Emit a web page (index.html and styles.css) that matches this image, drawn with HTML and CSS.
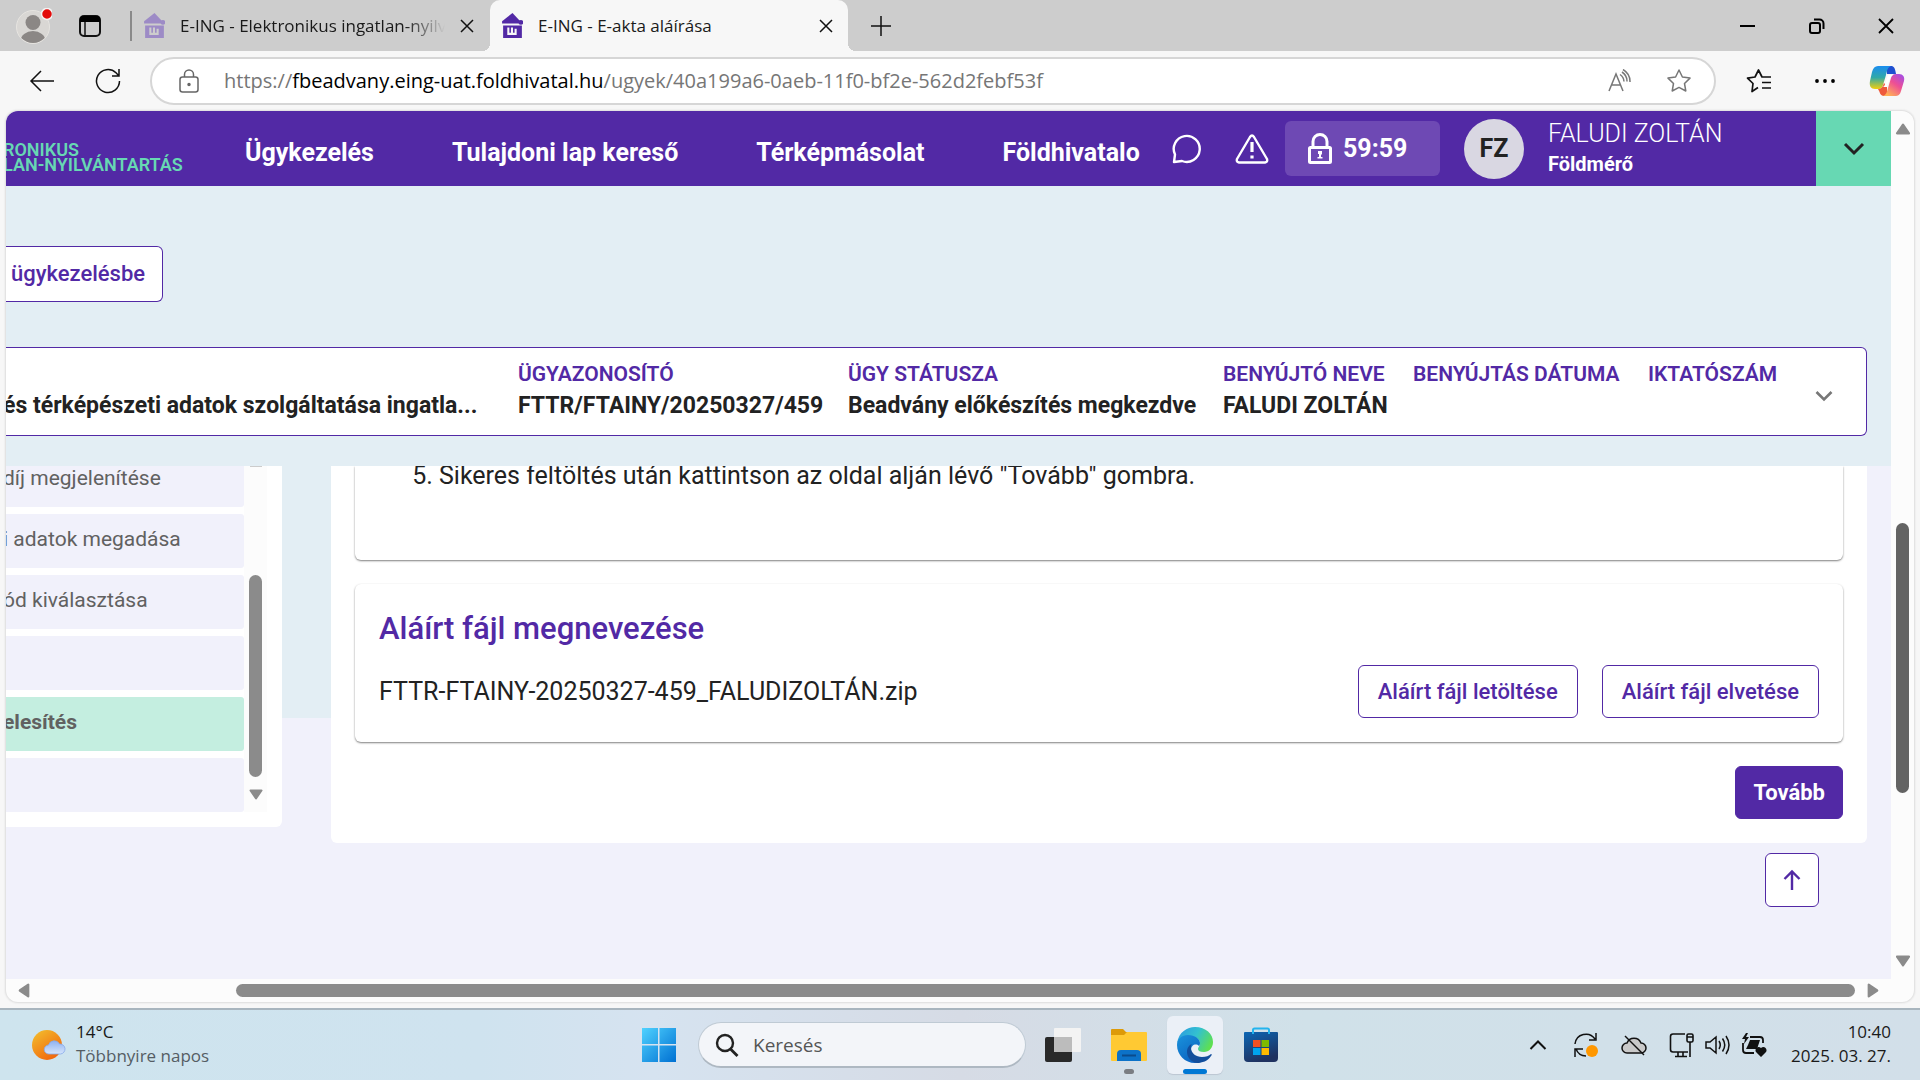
FILE: index.html
```
<!DOCTYPE html>
<html lang="hu">
<head>
<meta charset="utf-8">
<title>E-ING - E-akta aláírása</title>
<link rel="stylesheet" href="styles.css">
</head>
<body>
<svg width="0" height="0" class="defs" aria-hidden="true">
  <symbol id="house" viewBox="0 0 20 24"><path d="M10 0l7 7.500v2.500H0V8z"/><circle cx="18" cy="9" r="2.300"/><path d="M1 12h18v12H1zM5 14v7h9v-6h-2v4h-1.500v-5h-2v5H7v-5z" fill-rule="evenodd"/></symbol>
  <symbol id="cross" viewBox="0 0 14 14"><path d="M1 1l12 12M13 1L1 13" fill="none" stroke="currentColor" stroke-width="1.500"/></symbol>
  <symbol id="tri-up" viewBox="0 0 14 11"><path d="M7 1.500L12.500 9.500H1.500z" fill="currentColor" stroke="currentColor" stroke-width="2" stroke-linejoin="round"/></symbol>
  <symbol id="tri-down" viewBox="0 0 14 11"><path d="M7 9.500L12.500 1.500H1.500z" fill="currentColor" stroke="currentColor" stroke-width="2" stroke-linejoin="round"/></symbol>
  <symbol id="tri-left" viewBox="0 0 11 14"><path d="M1.500 7L9.500 1.500v11z" fill="currentColor" stroke="currentColor" stroke-width="2" stroke-linejoin="round"/></symbol>
  <symbol id="tri-right" viewBox="0 0 11 14"><path d="M9.500 7L1.500 1.500v11z" fill="currentColor" stroke="currentColor" stroke-width="2" stroke-linejoin="round"/></symbol>
</svg>
<div class="screen">
  <header class="tabstrip">
    <button class="icon-btn profile" aria-label="Profil"><svg width="36" height="36" viewBox="0 0 36 36"><defs><clipPath id="pc"><circle cx="17" cy="19" r="16"/></clipPath></defs><circle cx="17" cy="19" r="16.500" fill="#d9d7d4" stroke="#e6e4e0"/><g clip-path="url(#pc)" fill="#8b8785"><circle cx="17" cy="14.500" r="7.500"/><ellipse cx="17" cy="33" rx="12.500" ry="10"/></g><circle cx="31" cy="6" r="5.500" fill="#e30b0b" stroke="#f3f3f3" stroke-width="1.500"/></svg></button>
    <button class="icon-btn workspaces" aria-label="Munkaterületek"><svg width="22" height="22" viewBox="0 0 22 22"><rect x="1" y="1" width="20" height="20" rx="4" fill="none" stroke="#111" stroke-width="2"/><path d="M1 6V4a3 3 0 013-3h14a3 3 0 013 3v3H1z"/><path d="M6 7v14" stroke="#111" stroke-width="1.500"/></svg></button>
    <div class="tab tab-idle">
      <svg class="fav" width="21" height="25" fill="#9d8bc6"><use href="#house"/></svg>
      <span class="tab-title fade">E-ING - Elektronikus ingatlan-nyilvántartás</span>
      <button class="icon-btn" aria-label="Lap bezárása"><svg width="14" height="14"><use href="#cross"/></svg></button>
    </div>
    <div class="tab tab-active">
      <svg class="fav" width="21" height="25" fill="#5229a5"><use href="#house"/></svg>
      <span class="tab-title">E-ING - E-akta aláírása</span>
      <button class="icon-btn" aria-label="Lap bezárása"><svg width="14" height="14"><use href="#cross"/></svg></button>
    </div>
    <button class="icon-btn new-tab" aria-label="Új lap"><svg width="22" height="22" viewBox="0 0 22 22"><path d="M11 1v20M1 11h20" stroke="#111" stroke-width="1.500"/></svg></button>
    <div class="win-controls">
      <button class="icon-btn" aria-label="Kis méret"><svg width="16" height="16" viewBox="0 0 16 16"><path d="M0 8h15" stroke="#000" stroke-width="2"/></svg></button>
      <button class="icon-btn" aria-label="Előző méret"><svg width="16" height="16" viewBox="0 0 16 16"><rect x="1" y="5" width="10" height="10" rx="2" fill="none" stroke="#000" stroke-width="2"/><path d="M5 1.500h5.500a4 4 0 014 4V11" fill="none" stroke="#000" stroke-width="2"/></svg></button>
      <button class="icon-btn" aria-label="Bezárás"><svg width="16" height="16" viewBox="0 0 16 16"><path d="M1 1l14 14M15 1L1 15" stroke="#000" stroke-width="1.800"/></svg></button>
    </div>
  </header>

  <div class="toolbar">
    <button class="icon-btn" aria-label="Vissza"><svg width="26" height="24" viewBox="0 0 26 24"><path d="M25 12H2M12 2L2 12l10 10" fill="none" stroke="#111" stroke-width="1.500"/></svg></button>
    <button class="icon-btn reload" aria-label="Frissítés"><svg width="26" height="26" viewBox="0 0 26 26"><path d="M24.500 13A11.500 11.500 0 1121 4.800L24 8M24 1v7h-7" fill="none" stroke="#111" stroke-width="1.500"/></svg></button>
    <div class="address">
      <svg width="20" height="24" viewBox="0 0 20 24" fill="none" stroke="#666" stroke-width="1.500"><rect x="1" y="8" width="18" height="15" rx="2.500"/><path d="M5.500 8V5.500a4.500 4.500 0 019 0V8"/><circle cx="10" cy="15.500" r="1" fill="#666"/></svg>
      <div class="url" role="textbox" aria-label="Cím">https://<span class="host">fbeadvany.eing-uat.foldhivatal.hu</span>/ugyek/40a199a6-0aeb-11f0-bf2e-562d2febf53f</div>
      <button class="icon-btn" aria-label="Felolvasás"><svg width="24" height="24" viewBox="0 0 24 24" fill="none" stroke="#777" stroke-width="1.500"><path d="M1 22L8 5l7 17M3.500 16h9M12 5.500a9 9 0 014 7M14 3a11 11 0 015 9.500M15 .5a14 14 0 017 12.500"/></svg></button>
      <button class="icon-btn star" aria-label="Kedvencekhez adás"><svg width="26" height="26" viewBox="0 0 26 26" fill="none" stroke="#777" stroke-width="1.500" stroke-linejoin="round"><path d="M13 2l3.400 7 7.600 1.100-5.500 5.400 1.300 7.500-6.800-3.600L6.200 23l1.300-7.500L2 10.100 9.600 9z"/></svg></button>
    </div>
    <button class="icon-btn favs" aria-label="Kedvencek"><svg width="26" height="26" viewBox="0 0 26 26" fill="none" stroke="#111" stroke-width="1.700" stroke-linejoin="round"><path d="M12 19.500L6 23.500l1-8L1.500 10.200 9 9l3.500-7L16 9h9M16 14.500h9M16 20h9"/></svg></button>
    <button class="icon-btn dots" aria-label="Beállítások"><svg width="22" height="6" viewBox="0 0 22 6"><circle cx="3" cy="3" r="1.900"/><circle cx="11" cy="3" r="1.900"/><circle cx="19" cy="3" r="1.900"/></svg></button>
    <button class="icon-btn copilot" aria-label="Copilot"><svg width="36" height="32" viewBox="0 0 36 32"><defs><linearGradient id="ca" x1="0" y1="0" x2="0" y2="1"><stop offset="0" stop-color="#1b8df0"/><stop offset=".5" stop-color="#2fa9a8"/><stop offset="1" stop-color="#f2cf0c"/></linearGradient><linearGradient id="cb" x1="1" y1="0" x2=".3" y2="1"><stop offset="0" stop-color="#9a4df0"/><stop offset=".5" stop-color="#ee4f94"/><stop offset="1" stop-color="#ffb056"/></linearGradient></defs><path d="M17 1h5c3 0 4 2 5 8h-9z" fill="#1f4fd0"/><path d="M9 1h13c-3 1-4 4-5 9l-3 10c-1 3-2 4-5 4H6c-4 0-6-3-5-8l2-9c1-4 3-6 6-6z" fill="url(#ca)"/><path d="M9 24c4 0 5-3 6-6l3 3v10h-3c-4 0-4-4-6-7z" fill="#ee5a3c"/><path d="M27 9h3c4 0 6 3 5 7l-3 10c-1 4-3 5-6 5H14c3-1 4-4 5-8l3-10c1-3 2-4 5-4z" fill="url(#cb)"/><path d="M19 10h5c-2 1-3 3-4 6l-2 6h-4c2-1 2-3 3-6z" fill="#fff"/></svg></button>
  </div>

  <div class="viewport">
    <div class="page">
      <nav class="nav">
        <div class="logo"><span>RONIKUS</span><span>LAN-NYILVÁNTARTÁS</span></div>
        <div class="links">
          <a href="#">Ügykezelés</a><a href="#">Tulajdoni lap kereső</a><a href="#">Térképmásolat</a><a href="#">Földhivatalo</a>
        </div>
        <button class="icon-btn chat" aria-label="Üzenetek"><svg width="30" height="30" viewBox="0 0 30 30"><path d="M2 28l1-7.500A13 13 0 1110 27z" fill="none" stroke="#fff" stroke-width="2.400" stroke-linejoin="round"/></svg></button>
        <button class="icon-btn warn" aria-label="Figyelmeztetések"><svg width="34" height="30" viewBox="0 0 34 30"><path d="M15 3q2-3 4 0l13 22q1 3-2 3.500H4Q1 28 2 25z" fill="none" stroke="#fff" stroke-width="2.400" stroke-linejoin="round"/><path d="M17 8v10M17 21.500v3" stroke="#fff" stroke-width="3.200"/></svg></button>
        <div class="timer"><svg width="24" height="31" viewBox="0 0 24 31"><path d="M5 14V8.500a7 7 0 0114 0V14" fill="none" stroke="#fff" stroke-width="3"/><rect x="1.500" y="14.500" width="21" height="15" rx="1" fill="none" stroke="#fff" stroke-width="3"/><path d="M10 18h4v3l-1 1v2h1.500v1.500h-5V24H11v-3h-1z" fill="#fff"/></svg><span>59:59</span></div>
        <div class="avatar">FZ</div>
        <div class="user"><span class="user-name">FALUDI ZOLTÁN</span><span class="user-role">Földmérő</span></div>
        <button class="user-menu" aria-label="Felhasználói menü"><svg width="22" height="14" viewBox="0 0 22 14"><path d="M2 2l9 9 9-9" fill="none" stroke="#222" stroke-width="3"/></svg></button>
      </nav>

      <section class="head">
        <button class="btn back-btn">ügykezelésbe</button>
        <div class="case">
          <div class="case-first"><span class="value">és térképészeti adatok szolgáltatása ingatla...</span></div>
          <div><span class="label">ÜGYAZONOSÍTÓ</span><span class="value">FTTR/FTAINY/20250327/459</span></div>
          <div><span class="label">ÜGY STÁTUSZA</span><span class="value">Beadvány előkészítés megkezdve</span></div>
          <div><span class="label">BENYÚJTÓ NEVE</span><span class="value">FALUDI ZOLTÁN</span></div>
          <div><span class="label">BENYÚJTÁS DÁTUMA</span></div>
          <div><span class="label">IKTATÓSZÁM</span></div>
          <button class="icon-btn case-toggle" aria-label="Részletek"><svg width="18" height="12" viewBox="0 0 18 12"><path d="M1.500 2L9 9.500 16.500 2" fill="none" stroke="#777" stroke-width="2.600"/></svg></button>
        </div>
      </section>

      <main class="body">
        <aside class="side">
          <ul class="steps">
            <li>díj megjelenítése</li>
            <li>i adatok megadása</li>
            <li>ód kiválasztása</li>
            <li></li>
            <li class="current">elesítés</li>
            <li></li>
          </ul>
          <div class="side-scroll">
            <i class="cap"></i><i class="before"></i><i class="thumb"></i>
            <svg width="14" height="11"><use href="#tri-down"/></svg>
          </div>
        </aside>
        <div class="main-col">
          <div class="panel">
            <div class="card guide"><ol start="5"><li>Sikeres feltöltés után kattintson az oldal alján lévő "Tovább" gombra.</li></ol></div>
            <div class="card file">
              <h2>Aláírt fájl megnevezése</h2>
              <div class="file-row">
                <span class="file-name">FTTR-FTAINY-20250327-459_FALUDIZOLTÁN.zip</span>
                <button class="btn">Aláírt fájl letöltése</button>
                <button class="btn">Aláírt fájl elvetése</button>
              </div>
            </div>
            <button class="btn primary">Tovább</button>
          </div>
          <button class="btn to-top" aria-label="Az oldal tetejére"><svg width="18" height="22" viewBox="0 0 18 22"><path d="M9 21V3M1.500 10L9 2.500l7.500 7.500" fill="none" stroke="#5229a5" stroke-width="2.400"/></svg></button>
        </div>
      </main>
    </div>
    <div class="vscroll">
      <svg width="16" height="12"><use href="#tri-up"/></svg>
      <i class="v-before"></i><i class="v-thumb"></i><i class="v-after"></i>
      <svg width="16" height="12"><use href="#tri-down"/></svg>
    </div>
    <div class="hscroll">
      <svg width="12" height="15"><use href="#tri-left"/></svg>
      <i class="h-before"></i><i class="h-thumb"></i>
      <svg width="12" height="15"><use href="#tri-right"/></svg>
    </div>
  </div>

  <footer class="taskbar">
    <div class="weather">
      <svg width="34" height="32" viewBox="0 0 34 32"><defs><linearGradient id="sun" x1="0" y1="0" x2=".7" y2="1"><stop offset="0" stop-color="#f2c22f"/><stop offset="1" stop-color="#f2650c"/></linearGradient><linearGradient id="cl" x1="0" y1="0" x2="0" y2="1"><stop offset="0" stop-color="#8fb2f2"/><stop offset="1" stop-color="#d6e5fb"/></linearGradient></defs><circle cx="15" cy="16" r="15" fill="url(#sun)"/><path d="M17 25a4.500 4.500 0 01-.500-9 6 6 0 0111-1 5 5 0 011 10z" fill="url(#cl)" stroke="#86a9ea" stroke-width=".8"/></svg>
      <div class="two-line"><span>14°C</span><span class="dim">Többnyire napos</span></div>
    </div>
    <div class="apps">
      <button class="icon-btn" aria-label="Start"><svg width="36" height="36" viewBox="0 0 36 36"><defs><linearGradient id="win" x1="0" y1="0" x2="1" y2="1"><stop offset="0" stop-color="#4fd2ff"/><stop offset="1" stop-color="#0070d2"/></linearGradient></defs><path d="M1 1h16v16H1zM18.500 1H35v16H18.500zM1 18.500h16V35H1zM18.500 18.500H35V35H18.500z" fill="url(#win)"/></svg></button>
      <label class="search"><svg width="24" height="24" viewBox="0 0 24 24"><circle cx="10" cy="10" r="8" fill="none" stroke="#222" stroke-width="2.400"/><path d="M15.500 16l7 7" stroke="#222" stroke-width="2.800"/></svg><input type="text" placeholder="Keresés" aria-label="Keresés"></label>
      <button class="icon-btn" aria-label="Feladatnézet"><svg width="36" height="36" viewBox="0 0 36 36"><rect x="0" y="10" width="27" height="25" rx="2" fill="#292929"/><rect x="9" y="1" width="27" height="24" rx="1" fill="#f3f3f3"/><rect x="9" y="10" width="18" height="15" fill="#bcbcbc"/></svg></button>
      <button class="icon-btn app" aria-label="Fájlkezelő"><svg width="38" height="36" viewBox="0 0 38 36"><path d="M1 3q0-1 1-1h11l3 3h20v6H1z" fill="#dd9a08"/><path d="M1 8h13l3-3h19q1 0 1 1v27q0 1-1 1H2q-1 0-1-1z" fill="#ffc933"/><path d="M7 34v-7q0-4 4-4h16q4 0 4 4v7z" fill="#0c72c8"/><path d="M12 28.500h14" stroke="#0a4b8c" stroke-width="2"/></svg></button>
      <button class="icon-btn app running" aria-label="Microsoft Edge"><svg width="38" height="38" viewBox="0 0 38 38"><defs><linearGradient id="ea" x1="0" y1=".2" x2="1" y2=".6"><stop offset="0" stop-color="#2a9be0"/><stop offset=".5" stop-color="#33c1d0"/><stop offset="1" stop-color="#5fe04f"/></linearGradient><linearGradient id="eb" x1="0" y1="0" x2=".7" y2="1"><stop offset="0" stop-color="#1a93dc"/><stop offset="1" stop-color="#0a5fbe"/></linearGradient></defs><path d="M1 17C3 6 11 1 19 1c11 0 18 7 18 15 0 6-4 10-9 10-4 0-6-1-6-3s2-3 2-6c0-4-5-7-11-7-5 0-9 3-12 7z" fill="url(#ea)"/><path d="M1 19c0-6 5-10 11-10 7 0 12 4 12 8 0 2-1 3-1 3-3-3-8-1-8 4 0 7 7 12 14 10-3 2-6 3-10 3C9 37 1 29 1 19z" fill="url(#eb)"/><path d="M15 22c0 5 5 9 11 9 4 0 7-1 9-3 1 0 1 1 0 2-3 5-9 7-14 7-6-1-10-6-10-11 0-4 2-7 5-8-1 1-1 2-1 4z" fill="#124e9c"/></svg></button>
      <button class="icon-btn" aria-label="Microsoft Store"><svg width="36" height="36" viewBox="0 0 36 36"><defs><linearGradient id="st" x1="0" y1="0" x2=".4" y2="1"><stop offset="0" stop-color="#0c66b4"/><stop offset="1" stop-color="#1f3260"/></linearGradient></defs><path d="M1 6q0-1 1-1h32q1 0 1 1v25q0 4-4 4H5q-4 0-4-4z" fill="url(#st)"/><path d="M10 7V3q0-1.500 1.500-1.500h13Q26 1.500 26 3v4" fill="none" stroke="#23b4ee" stroke-width="2"/><path d="M10 13h7.500v7H10z" fill="#f25022"/><path d="M18.500 13H26v7h-7.500z" fill="#7fba00"/><path d="M10 21h7.500v7H10z" fill="#00a4ef"/><path d="M18.500 21H26v7h-7.500z" fill="#ffb900"/></svg></button>
    </div>
    <div class="tray">
      <svg class="tray-up" width="18" height="12" viewBox="0 0 18 12"><path d="M1.500 10L9 2.500l7.500 7.500" fill="none" stroke="#111" stroke-width="2"/></svg>
      <svg class="sync" width="26" height="26" viewBox="0 0 26 26" fill="none" stroke="#111" stroke-width="1.500"><path d="M2 12A11 11 0 0122 7M23 1v7h-7M13 24A11 11 0 013 17M2 25v-8h8"/><circle cx="19" cy="19" r="6" fill="#ff9700" stroke="none"/></svg>
      <svg class="cloud" width="26" height="24" viewBox="0 0 26 24"><path d="M6 20a5 5 0 010-10 7.500 7.500 0 0114 0 5 5 0 010 10z" fill="#c9c9c9" stroke="#111" stroke-width="1.500"/><path d="M4 3l19 19" stroke="#111" stroke-width="1.500"/></svg>
      <svg width="26" height="26" viewBox="0 0 26 26" fill="none" stroke="#111" stroke-width="1.600"><path d="M16 2H4q-2.500 0-2.500 2.500v13Q1.500 20 4 20h15M9 20v4M14 20v4M6 24.500h12"/><rect x="18" y="2" width="6" height="8" rx="1.500"/><path d="M21 10v15M18 5h6"/></svg>
      <svg width="26" height="24" viewBox="0 0 26 24" fill="none" stroke="#111" stroke-width="1.500"><path d="M1 9h4l6-5v16l-6-5H1zM14 8q2.500 4 0 8M17.500 5.500q4.500 6.500 0 13M21 3q6 9 0 18"/></svg>
      <svg width="26" height="26" viewBox="0 0 26 26"><path d="M9 5h10q3 0 3 3v3M2 11v7q0 3 3 3h8" fill="none" stroke="#111" stroke-width="1.800"/><path d="M9 8h10l-3 9H5l2-4z" fill="#111"/><path d="M5 1L1 7h3l-1 5 5-7H5l2-4z" fill="#111"/><path d="M20 25l-5-5c-2-3 2-7 5-4 3-3 7 1 5 4z" fill="#111"/></svg>
      <div class="two-line clock"><span>10:40</span><span>2025. 03. 27.</span></div>
    </div>
  </footer>
</div>
</body>
</html>
```
FILE: styles.css
```
* { box-sizing: border-box; }
body { margin: 0; font-family: "Open Sans", sans-serif; color: #1a1a1a; background: #f7f7f7; }
button { font-family: inherit; cursor: pointer; }
svg { display: block; flex: none; }
.defs { position: absolute; }
.icon-btn { display: flex; flex: none; align-items: center; justify-content: center; padding: 0; border: 0; background: none; color: #111; }
.screen { display: flex; flex-direction: column; height: 100vh; overflow: hidden; }

/* browser tabs */
.tabstrip { display: flex; flex: none; align-items: center; height: 51px; padding-left: 16px; background: #cdcdcd; }
.workspaces { margin-left: 27px; }
.tab { display: flex; align-items: center; gap: 15px; }
.tab-idle { width: 360px; height: 30px; margin-left: 29px; padding: 0 16px 0 12px; border-left: 2px solid #8a8a8a; }
.tab-active { position: relative; width: 358px; height: 51px; padding: 0 15px 0 12px; border-radius: 10px 10px 0 0; background: #f7f7f7; }
.tab-active::before, .tab-active::after { content: ""; position: absolute; bottom: 0; width: 8px; height: 8px; }
.tab-active::before { left: -8px; background: radial-gradient(circle at 0 0, #cdcdcd 8px, #f7f7f7 8px); }
.tab-active::after { right: -8px; background: radial-gradient(circle at 100% 0, #cdcdcd 8px, #f7f7f7 8px); }
.tab-title { flex: 1; overflow: hidden; font-size: 17px; line-height: 24px; white-space: nowrap; }
.fade { -webkit-mask-image: linear-gradient(90deg, #000 85%, transparent); mask-image: linear-gradient(90deg, #000 85%, transparent); }
.new-tab { margin-left: 22px; }
.win-controls { display: flex; gap: 53px; margin: 0 26px 0 auto; }

/* address bar */
.toolbar { display: flex; flex: none; align-items: center; height: 60px; padding: 0 15px 0 29px; background: #f7f7f7; }
.reload { margin-left: 40px; }
.address { display: flex; flex: 1; align-items: center; min-width: 0; height: 48px; margin-left: 29px; padding: 0 22px 0 27px; border: 2px solid #d6d6d6; border-radius: 24px; background: #fff; }
.url { flex: 1; overflow: hidden; margin-left: 25px; color: #767676; font-size: 20px; line-height: 28px; white-space: nowrap; }
.host { color: #000; }
.star { margin-left: 34px; }
.favs { margin-left: 30px; }
.dots { margin-left: 42px; }
.copilot { margin-left: 33px; }

/* web page window with its scrollbars */
.viewport { display: grid; flex: 1; grid-template: minmax(0, 1fr) 23px / minmax(0, 1fr) 23px; min-height: 0; margin: 0 6px 6px; overflow: hidden; border-radius: 12px; background: #fcfcfc; box-shadow: 0 0 2px 1px #dcdcdc; }
.page { display: flex; flex-direction: column; overflow: hidden; background: #f1f1fb; color: #222; font-family: Roboto, sans-serif; }
.vscroll { display: flex; flex-direction: column; align-items: center; padding: 12px 0; color: #8b8b8b; }
.v-before { flex: 389; }
.v-thumb { flex: 271; width: 13px; border-radius: 7px; background: #636363; }
.v-after { flex: 163; }
.hscroll { display: flex; align-items: center; padding: 0 12px; color: #8b8b8b; }
.h-before { flex: 206; }
.h-thumb { flex: 1620; height: 13px; margin-right: 12px; border-radius: 7px; background: #8b8b8b; }

/* site navigation */
.nav { display: flex; flex: none; align-items: center; height: 75px; background: #5229a5; color: #fff; }
.logo { display: flex; flex: none; flex-direction: column; width: 177px; margin-top: 16px; color: #67d8b3; font-size: 18px; font-weight: 600; line-height: 15px; text-indent: -3px; white-space: nowrap; }
.links { display: flex; flex: 1; gap: 78px; min-width: 0; margin-left: 62px; padding-top: 8px; overflow: hidden; }
.links a { color: #fff; font-size: 25px; font-weight: 700; line-height: 32px; text-decoration: none; white-space: nowrap; }
.chat { margin-left: 32px; }
.warn { margin-left: 33px; }
.timer { display: flex; align-items: center; gap: 11px; width: 155px; height: 55px; margin-left: 16px; padding-left: 23px; border-radius: 6px; background: #6e49b4; font-size: 25px; font-weight: 700; }
.avatar { display: flex; flex: none; align-items: center; justify-content: center; width: 60px; height: 60px; margin-left: 24px; border-radius: 50%; background: #d9d7e2; color: #222; font-size: 25px; font-weight: 700; }
.user { display: flex; flex: none; flex-direction: column; width: 292px; padding-left: 24px; line-height: 30px; }
.user-name { font-size: 25px; font-weight: 300; }
.user-role { font-size: 20px; font-weight: 700; }
.user-menu { display: flex; flex: none; align-items: center; justify-content: center; width: 75px; height: 75px; padding: 0; border: 0; background: #67d8b3; }

/* case header */
.head { flex: none; padding: 60px 24px 30px 0; background: #e3eef4; }
.btn { flex: none; height: 54px; padding: 0 19px; border: 1px solid #5229a5; border-radius: 6px; background: #fff; color: #5229a5; font-size: 22px; font-weight: 500; line-height: 30px; white-space: nowrap; }
.back-btn { display: block; height: 56px; padding: 0 17px 0 5px; border-left: 0; border-radius: 0 6px 6px 0; }
.case { display: grid; grid-template-columns: minmax(0, 1fr) 306px 351px 166px 211px 131px 30px; gap: 24px; height: 89px; margin-top: 45px; padding: 11px 33px 11px 0; border: 1px solid #5229a5; border-left: 0; border-radius: 0 6px 6px 0; background: #fff; }
.case div { display: flex; flex-direction: column; }
.case .case-first { justify-content: flex-end; padding-bottom: 3px; text-indent: -3px; }
.label, .value { line-height: 31px; white-space: nowrap; }
.label { color: #5229a5; font-size: 21px; font-weight: 600; }
.value { font-size: 23px; font-weight: 700; }
.case-toggle { justify-content: flex-end; padding-top: 8px; }

/* steps and content */
.body { display: flex; flex: 1; align-items: flex-start; min-height: 0; padding-right: 24px; overflow: hidden; background: linear-gradient(#e3eef4, #e3eef4) 0 0 / calc(100% - 24px) 252px no-repeat; }
.side { display: flex; flex: none; width: 276px; height: 361px; padding: 0 15px 15px 0; border-radius: 0 0 6px 0; background: #fff; }
.steps { display: flex; flex: 1; flex-direction: column; gap: 7px; justify-content: flex-end; margin: 0; padding: 0; overflow: hidden; list-style: none; }
.steps li { flex: none; height: 54px; border-radius: 0 3px 3px 0; background: #f1f1fb; color: #616161; font-size: 21px; line-height: 51px; text-indent: -3px; white-space: nowrap; }
.steps .current { background: #c4eee0; font-weight: 700; }
.side-scroll { display: flex; flex-direction: column; align-items: center; width: 23px; padding-bottom: 12px; background: #fcfcfc; color: #8b8b8b; }
.cap { width: 12px; height: 1px; background: #ccc; }
.before { flex: 108; }
.thumb { flex: 202; width: 13px; margin-bottom: 12px; border-radius: 7px; background: #8b8b8b; }
.main-col { display: flex; flex: 1; flex-direction: column; gap: 10px; min-width: 0; margin-left: 49px; }
.panel { display: flex; flex-direction: column; gap: 24px; padding: 0 24px 24px; border-radius: 0 0 6px 6px; background: #fff; }
.card { border-radius: 6px; background: #fff; box-shadow: 0 1px 2px rgba(0, 0, 0, .5); }
.guide { height: 94px; border-radius: 0 0 6px 6px; }
.guide ol { margin: -5px 0 0; padding-left: 84px; font-size: 25px; line-height: 30px; }
.file { padding: 24px; }
.file h2 { margin: 0 0 15px; color: #5229a5; font-size: 31px; font-weight: 500; line-height: 42px; }
.file-row { display: flex; align-items: center; gap: 24px; }
.file-row .btn { height: 53px; }
.file-name { flex: 1; font-size: 25px; line-height: 30px; }
.primary { align-self: flex-end; height: 53px; padding: 0 17px; background: #5229a5; color: #fff; font-weight: 700; }
.to-top { display: flex; align-items: center; justify-content: center; align-self: flex-end; width: 54px; margin-right: 48px; padding: 0; }

/* taskbar */
.taskbar { display: grid; flex: none; grid-template-columns: 1fr auto 1fr; align-items: center; height: 72px; border-top: 2px solid #a8b5be; background: linear-gradient(90deg, #cee4ee 0, #cfe3ef 25%, #d6e3f0 34%, #d6dbe5 50%, #d0e1e9 68%, #d2dfe9 100%); }
.weather { display: flex; align-items: center; gap: 10px; padding-left: 32px; }
.two-line { display: flex; flex-direction: column; padding-bottom: 2px; font-size: 17px; line-height: 24px; white-space: nowrap; }
.dim { color: #555d64; }
.apps { display: flex; align-items: center; }
.search { display: flex; align-items: center; gap: 14px; width: 328px; height: 46px; margin: 0 19px 0 21px; padding-left: 16px; border: 1px solid #bfcad4; border-bottom: 2px solid #aeb8c2; border-radius: 23px; background: #f3f5f9; }
.search input { flex: 1; min-width: 0; padding: 0; border: 0; outline: 0; background: none; font: 19px/28px "Open Sans", sans-serif; }
.search input::placeholder { color: #555; opacity: 1; }
.app { position: relative; width: 56px; height: 58px; margin-left: 20px; border-radius: 6px; }
.app::after { content: ""; position: absolute; bottom: 0; left: 23px; width: 10px; height: 5px; border-radius: 3px; background: #7a7d82; }
.running { margin: 0 20px 0 10px; background: #ebf0f7; box-shadow: 0 1px 1px #bcc6d2; }
.running::after { left: 16px; width: 24px; background: #0078d4; }
.tray { display: flex; align-items: center; justify-content: flex-end; gap: 10px; padding-right: 29px; }
.tray-up { margin-right: 16px; }
.sync, .cloud { margin-right: 12px; }
.clock { margin-left: 14px; text-align: right; }
```
